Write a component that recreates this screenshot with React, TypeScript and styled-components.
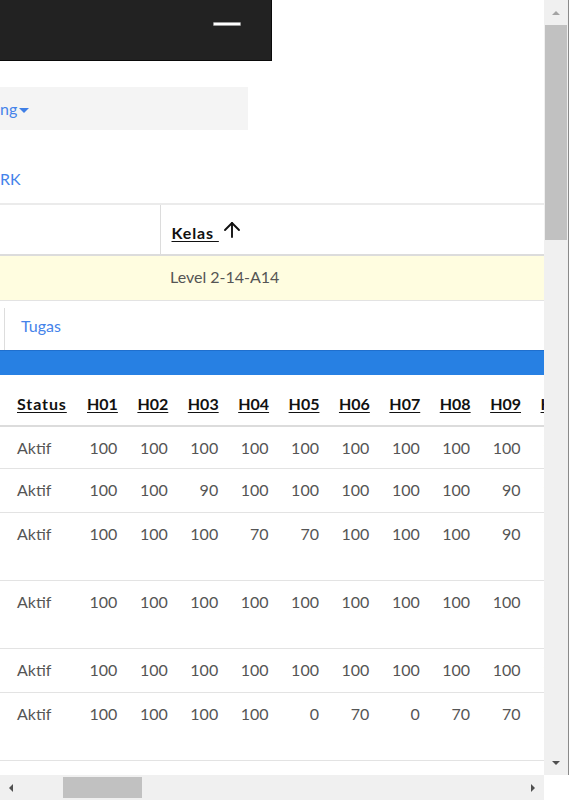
import React from 'react';
import styled, { createGlobalStyle } from 'styled-components';
import { ArrowUp } from 'lucide-react';

const GlobalStyle = createGlobalStyle`
  html, body {
    margin: 0;
    padding: 0;
    background: #fff;
  }
  body {
    font-family: Lato, "Noto Sans", sans-serif;
    font-size: 16px;
    color: #555;
  }
`;

const Frame = styled.div`
  width: 569px;
  height: 800px;
  display: grid;
  grid-template-columns: 544px 25px;
  grid-template-rows: 775px 25px;
  overflow: hidden;
`;

const Viewport = styled.div`
  overflow: hidden;
  background: #fff;
`;

const NavBar = styled.div`
  width: 241px;
  height: 60px;
  background: #222;
  border-right: 1px solid #0a0a0a;
  border-bottom: 1px solid #0a0a0a;
  display: flex;
  align-items: center;
  justify-content: flex-end;
  padding-right: 30px;
`;

const Toggle = styled.div`
  height: 36px;
  display: flex;
  align-items: center;
  margin-top: -12px;
`;

const IconBar = styled.span`
  display: block;
  width: 26px;
  height: 2px;
  background: #fff;
  border: 1px solid #9a9a9a;
  border-radius: 1px;
`;

const MenuBox = styled.div`
  margin-top: 26px;
  width: 248px;
  height: 43px;
  background: #f4f4f4;
  display: flex;
  align-items: center;
`;

const NavLink = styled.a`
  color: #4583ea;
  text-decoration: none;
  line-height: 20px;
`;

const Caret = styled.span`
  display: inline-block;
  width: 0;
  height: 0;
  margin-left: 2px;
  vertical-align: middle;
  border-top: 5px solid #3f7fe6;
  border-left: 5px solid transparent;
  border-right: 5px solid transparent;
`;

const LinkRow = styled.div`
  height: 75px;
  display: flex;
  align-items: flex-end;
  padding-bottom: 14px;
  box-sizing: border-box;
  border-bottom: 2px solid #ebebeb;
`;

const Table = styled.table`
  border-collapse: collapse;
  table-layout: fixed;
  width: 544px;
`;

const HeadCell = styled.th<{ $align?: string; $divider?: boolean; $pad?: number }>`
  text-align: ${(p) => p.$align || 'left'};
  vertical-align: bottom;
  font-weight: 700;
  color: #111;
  padding: 0 ${(p) => (p.$align === 'right' ? 10 : 0)}px 12px ${(p) => p.$pad ?? 10}px;
  border-bottom: 2px solid #dcdcdc;
  border-right: ${(p) => (p.$divider ? '1px solid #dcdcdc' : 'none')};
  white-space: nowrap;
  overflow: hidden;
`;

const SortLabel = styled.span<{ $wide?: boolean }>`
  text-decoration: underline;
  text-underline-offset: 2px;
  letter-spacing: ${(p) => (p.$wide ? '0.9px' : '0')};
`;

const SortWrap = styled.span`
  display: inline-flex;
  align-items: center;
  gap: 1px;
`;

const Cell = styled.td<{ $align?: string; $pad?: number }>`
  text-align: ${(p) => p.$align || 'left'};
  vertical-align: top;
  padding: 11px ${(p) => (p.$align === 'right' ? 10 : 0)}px 0 ${(p) => p.$pad ?? 10}px;
  line-height: 20px;
  white-space: nowrap;
  overflow: hidden;
`;

const Row = styled.tr<{ $bg?: string; $h: number }>`
  height: ${(p) => p.$h}px;
  background: ${(p) => p.$bg || 'transparent'};
  border-bottom: 1px solid #e3e3e3;
`;

const HeadRow = styled.tr<{ $h: number }>`
  height: ${(p) => p.$h}px;
`;

const TabRow = styled.div`
  height: 49px;
  display: flex;
  align-items: stretch;
  padding-top: 7px;
  box-sizing: border-box;
`;

const TabEdge = styled.div`
  width: 4px;
  border-right: 1px solid #ddd;
`;

const Tab = styled.a`
  color: #4583ea;
  text-decoration: none;
  padding: 0 16px;
  display: flex;
  align-items: center;
  margin-top: -7px;
`;

const BlueBar = styled.div`
  height: 25px;
  background: #2780e3;
  border-top: 1px solid #1f6fce;
  box-sizing: border-box;
`;

const VScroll = styled.div`
  background: #f0f0f0;
  border-right: 1px solid #8a8a8a;
  display: flex;
  flex-direction: column;
  align-items: center;
  padding: 0 1px;
`;

const HScroll = styled.div`
  background: #f0f0f0;
  display: flex;
  align-items: center;
`;

const Corner = styled.div`
  background: #fff;
`;

const ArrowBtn = styled.div<{ $dir: 'up' | 'down' | 'left' | 'right'; $dim?: boolean }>`
  flex: none;
  display: flex;
  align-items: center;
  justify-content: center;
  width: ${(p) => (p.$dir === 'up' || p.$dir === 'down' ? '100%' : '22px')};
  height: ${(p) => (p.$dir === 'up' || p.$dir === 'down' ? '25px' : '100%')};
  &::after {
    content: '';
    width: 0;
    height: 0;
    ${(p) => {
      const c = p.$dim ? '#a3a3a3' : '#505050';
      if (p.$dir === 'up') return `border-left: 4px solid transparent; border-right: 4px solid transparent; border-bottom: 4px solid ${c};`;
      if (p.$dir === 'down') return `border-left: 4px solid transparent; border-right: 4px solid transparent; border-top: 4px solid ${c};`;
      if (p.$dir === 'left') return `border-top: 4px solid transparent; border-bottom: 4px solid transparent; border-right: 4px solid ${c};`;
      return `border-top: 4px solid transparent; border-bottom: 4px solid transparent; border-left: 4px solid ${c};`;
    }}
  }
`;

const VThumb = styled.div`
  width: 100%;
  height: 215px;
  background: #c1c1c1;
`;

const VTrack = styled.div`
  flex: 1;
  width: 100%;
`;

const HTrack = styled.div`
  flex: 1;
  height: 100%;
  display: flex;
  align-items: center;
  padding-left: 41px;
`;

const HThumb = styled.div`
  width: 79px;
  height: 21px;
  background: #c1c1c1;
`;

const cols = ['H01', 'H02', 'H03', 'H04', 'H05', 'H06', 'H07', 'H08', 'H09', 'H10'];

const rows: { h: number; vals: number[] }[] = [
  { h: 43, vals: [100, 100, 100, 100, 100, 100, 100, 100, 100, 100] },
  { h: 44, vals: [100, 100, 90, 100, 100, 100, 100, 100, 90, 100] },
  { h: 68, vals: [100, 100, 100, 70, 70, 100, 100, 100, 90, 100] },
  { h: 68, vals: [100, 100, 100, 100, 100, 100, 100, 100, 100, 100] },
  { h: 44, vals: [100, 100, 100, 100, 100, 100, 100, 100, 100, 100] },
  { h: 68, vals: [100, 100, 100, 100, 0, 70, 0, 70, 70, 100] },
];

export default function App() {
  return (
    <>
      <GlobalStyle />
      <Frame>
        <Viewport>
          <NavBar>
            <Toggle>
              <IconBar />
            </Toggle>
          </NavBar>

          <MenuBox>
            <NavLink href="#">
              ng<Caret />
            </NavLink>
          </MenuBox>

          <LinkRow>
            <NavLink href="#">RK</NavLink>
          </LinkRow>

          <Table>
            <colgroup>
              <col style={{ width: 160 }} />
              <col />
            </colgroup>
            <thead>
              <HeadRow $h={50}>
                <HeadCell $divider />
                <HeadCell $pad={11}>
                  <SortWrap>
                    <SortLabel $wide>Kelas&nbsp;</SortLabel>
                    <ArrowUp size={24} strokeWidth={1.9} color="#111" style={{ marginTop: -6 }} />
                  </SortWrap>
                </HeadCell>
              </HeadRow>
            </thead>
            <tbody>
              <Row $h={45} $bg="#fffde0">
                <Cell />
                <Cell $pad={10}>Level 2-14-A14</Cell>
              </Row>
            </tbody>
          </Table>

          <TabRow>
            <TabEdge />
            <Tab href="#">Tugas</Tab>
          </TabRow>
          <BlueBar />

          <Table>
            <colgroup>
              <col style={{ width: 77 }} />
              {cols.map((c) => (
                <col key={c} style={{ width: 50.4 }} />
              ))}
            </colgroup>
            <thead>
              <HeadRow $h={51}>
                <HeadCell $pad={17}>
                  <SortLabel $wide>Status</SortLabel>
                </HeadCell>
                {cols.map((c) => (
                  <HeadCell key={c} $align="right">
                    <SortLabel>{c}</SortLabel>
                  </HeadCell>
                ))}
              </HeadRow>
            </thead>
            <tbody>
              {rows.map((r, i) => (
                <Row key={i} $h={r.h}>
                  <Cell $pad={17}>Aktif</Cell>
                  {r.vals.map((v, j) => (
                    <Cell key={j} $align="right">
                      {v}
                    </Cell>
                  ))}
                </Row>
              ))}
            </tbody>
          </Table>
        </Viewport>

        <VScroll>
          <ArrowBtn $dir="up" $dim />
          <VThumb />
          <VTrack />
          <ArrowBtn $dir="down" />
        </VScroll>

        <HScroll>
          <ArrowBtn $dir="left" />
          <HTrack>
            <HThumb />
          </HTrack>
          <ArrowBtn $dir="right" />
        </HScroll>
        <Corner />
      </Frame>
    </>
  );
}
